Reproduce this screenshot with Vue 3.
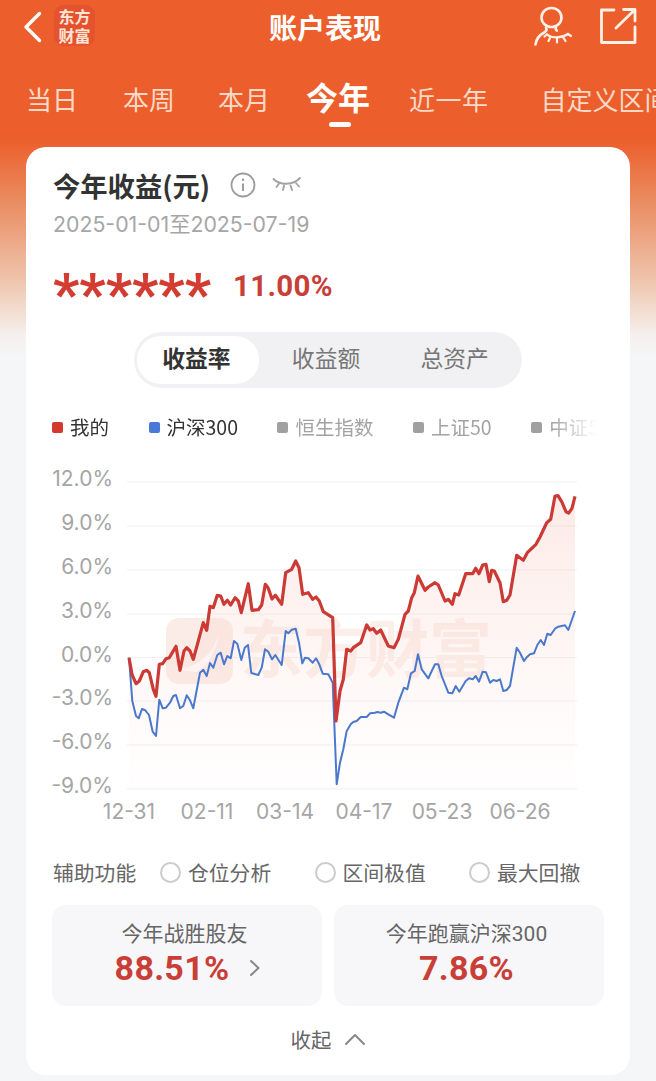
<script setup>
const toPts = (arr, ox) => {
  const out = []
  for (let i = 0; i < arr.length; i += 2) out.push([+(ox + arr[i] / 3).toFixed(1), +(460 + arr[i + 1] / 3).toFixed(1)])
  return out
}
const red = [
  ...toPts([267,590,276,640,288,668,298,660,310,632,320,628,328,635,340,685,348,706,358,610,368,608,378,593,388,590,408,556,420,628,432,570,440,560,450,570,460,595,490,485,500,508,510,436,520,440,532,403,542,405,552,430,562,418,572,432,585,410,595,420,604,455,625,368,636,448,655,446,665,432,676,370,685,382,696,414,706,403,725,430,737,335,755,325,767,300,777,320,788,400,805,395,818,415,828,408,838,420,850,452,878,470], 40),
  ...toPts([48,780,60,690,70,655,80,565,92,570,100,560,122,545,140,492,150,507,160,503,170,517,182,507,205,555,222,560,235,535,255,460,265,450,275,410,283,395,294,345,315,388,325,378,345,365,355,372,375,420,385,415,397,430,405,398,416,402,437,338,458,338,467,322,477,338,488,312,498,310,508,362,515,328,523,330,540,365,550,422,560,418,570,402,590,283,610,298,622,275,648,250,660,228,680,185,692,175,705,105,714,104,725,122,738,152,746,156,756,142,765,106], 320)
]
const blue = [
  ...toPts([267,590,277,720,288,765,296,772,306,744,316,748,327,762,338,812,348,825,358,716,368,742,378,740,390,725,400,705,408,702,420,742,430,735,440,703,450,718,460,742,480,635,490,626,500,645,510,606,520,620,532,582,542,575,552,610,562,585,572,592,582,540,592,548,604,597,614,560,624,552,634,636,655,642,665,620,675,565,685,572,696,595,706,582,725,612,737,510,745,517,755,506,767,503,777,545,787,607,795,590,805,592,818,605,828,592,838,610,848,638,865,640,878,665], 40),
  ...toPts([50,970,60,905,70,865,80,810,92,790,100,783,110,780,122,768,140,768,150,757,165,755,172,753,182,755,192,752,205,760,222,770,235,725,252,680,262,685,273,637,284,630,294,580,305,625,325,652,345,610,355,610,365,645,385,695,397,697,407,675,418,692,437,660,447,652,458,655,467,645,477,662,488,632,498,634,510,665,520,657,530,660,540,655,550,690,560,687,570,675,590,560,600,575,612,600,622,587,630,580,642,577,652,552,662,537,672,552,682,518,692,522,705,503,715,497,735,493,745,507,765,450], 320)
]
const line = (p) => 'M' + p.map((q) => q.join(' ')).join('L')
const redPath = line(red)
const bluePath = line(blue)
const areaPath = redPath + `L${red[red.length - 1][0]} 788L${red[0][0]} 788Z`

const yLabels = [
  { t: '12.0%', g: 481 }, { t: '9.0%', g: 525 }, { t: '6.0%', g: 569 }, { t: '3.0%', g: 613 },
  { t: '0.0%', g: 656.5 }, { t: '-3.0%', g: 700 }, { t: '-6.0%', g: 744 }, { t: '-9.0%', g: 788 }
]
const xLabels = [
  { t: '12-31', x: 129 }, { t: '02-11', x: 207 }, { t: '03-14', x: 285 },
  { t: '04-17', x: 364 }, { t: '05-23', x: 442 }, { t: '06-26', x: 520 }
]
const tabs = ['当日', '本周', '本月', '今年', '近一年', '自定义区间']
const legend = [
  { t: '我的', c: 'red', on: true }, { t: '沪深300', c: 'blue', on: true },
  { t: '恒生指数', c: 'grey' }, { t: '上证50', c: 'grey' }, { t: '中证500', c: 'grey' }
]
const radios = ['仓位分析', '区间极值', '最大回撤']
const logoText = '东方\n财富'
</script>

<template>
  <div class="page">
    <header class="nav">
      <svg class="back" width="20" height="32" viewBox="0 0 20 32"><path d="M16.5 2.5 3 16l13.5 13.5" fill="none" stroke="#fff" stroke-width="3.4" stroke-linecap="round" stroke-linejoin="round"/></svg>
      <div class="logo">{{ logoText }}</div>
      <h1 class="title">账户表现</h1>
      <svg class="user" width="40" height="40" viewBox="0 0 40 40" fill="none" stroke="#fdf0e6" stroke-width="2.6" stroke-linecap="round" stroke-linejoin="round">
        <ellipse cx="18.5" cy="11.5" rx="10" ry="9.5"/>
        <path d="M13 21.5c1 2 1 3-1 4.500C6.500 29 3 33 2.500 38.500"/>
        <path d="M23 21c-.6 1.500-.4 2.500.8 3.600"/>
        <path d="M14 28.500c5 4 14 4 21-.5" stroke-width="2.200"/>
        <path d="M17.500 31 15.500 35M24 32.500V36.500M30 31l2.500 4M35 28l3 2M14 28.500l-2.500 2" stroke-width="2.200"/>
      </svg>
      <svg class="share" width="38" height="38" viewBox="0 0 38 38" fill="none" stroke="#fdf0e6" stroke-width="2.800" stroke-linecap="round" stroke-linejoin="round">
        <path d="M15 3H2.500v32.500H36V20"/>
        <path d="M17 21 35.500 3M24.500 2.500H36V14"/>
      </svg>
    </header>

    <nav class="tabs">
      <span v-for="t in tabs" :key="t" class="tab" :class="{ active: t === '今年' }">{{ t }}</span>
    </nav>

    <main class="card">
      <div class="head">
        <span class="h-title">今年收益(元)</span>
        <svg class="info" width="26" height="26" viewBox="0 0 26 26" fill="none" stroke="#9c9c9c" stroke-width="1.800"><circle cx="13" cy="13" r="11.500"/><path d="M13 11.500v7.500" stroke-width="2"/><circle cx="13" cy="7.800" r="1.200" fill="#9c9c9c" stroke="none"/></svg>
        <svg class="eye" width="30" height="18" viewBox="0 0 30 18" fill="none" stroke="#a3a3a3" stroke-width="1.900" stroke-linecap="round"><path d="M1.500 3C8 9.500 21 9.500 28 2"/><path d="M7 7.500 4.500 11M12 9.500 11 14M18.500 9.500 20 14M24 7 27 10.500"/></svg>
      </div>
      <p class="date">2025-01-01至2025-07-19</p>
      <div class="amount">
        <span class="stars">******</span>
        <span class="pct">11.00%</span>
      </div>

      <div class="segment">
        <span class="seg on">收益率</span>
        <span class="seg">收益额</span>
        <span class="seg">总资产</span>
      </div>

      <div class="legend">
        <span v-for="l in legend" :key="l.t" class="leg" :class="[l.c, { on: l.on }]"><i></i>{{ l.t }}</span>
      </div>

      <svg class="chart" width="604" height="370" viewBox="26 460 604 370">
        <defs>
          <linearGradient id="area" x1="0" y1="0" x2="0" y2="1">
            <stop offset="0" stop-color="#f6b9ae" stop-opacity="0.3"/>
            <stop offset="0.55" stop-color="#f9cfc6" stop-opacity="0.18"/>
            <stop offset="1" stop-color="#fbe4df" stop-opacity="0.04"/>
          </linearGradient>
        </defs>
        <line v-for="l in yLabels" :key="l.t" x1="127" x2="577" :y1="l.g" :y2="l.g" stroke="#f0f0f3" stroke-width="1.200"/>
        <g class="wm">
          <rect x="166" y="617" width="67" height="66" rx="13" fill="#fbece7"/>
          <path d="M178 669c24-4 38-20 42-42-4 24-10 36-24 44z" fill="#fff" opacity=".8"/>
          <text x="240" y="671" class="wm-text">东方财富</text>
        </g>
        <path :d="areaPath" fill="url(#area)"/>
        <path :d="bluePath" fill="none" stroke="#4a78cc" stroke-width="2" stroke-linejoin="round"/>
        <path :d="redPath" fill="none" stroke="#cb3a35" stroke-width="3.200" stroke-linejoin="round"/>
        <text v-for="l in yLabels" :key="'y' + l.t" x="113" :y="l.g + 4" text-anchor="end" class="axis">{{ l.t }}</text>
        <text v-for="l in xLabels" :key="l.t" :x="l.x" y="818" text-anchor="middle" class="axis">{{ l.t }}</text>
      </svg>

      <div class="aux">
        <span class="aux-label">辅助功能</span>
        <label v-for="r in radios" :key="r" class="radio"><i></i>{{ r }}</label>
      </div>

      <div class="stats">
        <div class="stat">
          <span class="s-label">今年战胜股友</span>
          <span class="s-value first">88.51%
            <svg class="s-arrow" width="12" height="18" viewBox="0 0 12 18"><path d="M2 2l7.500 7L2 16" fill="none" stroke="#888" stroke-width="2" stroke-linecap="round" stroke-linejoin="round"/></svg>
          </span>
        </div>
        <div class="stat">
          <span class="s-label">今年跑赢沪深300</span>
          <span class="s-value">7.86%</span>
        </div>
      </div>

      <div class="fold">收起
        <svg width="22" height="14" viewBox="0 0 22 14"><path d="M2 12 11 3l9 9" fill="none" stroke="#888" stroke-width="2" stroke-linecap="round" stroke-linejoin="round"/></svg>
      </div>
    </main>
  </div>
</template>

<style>
html, body { margin: 0; padding: 0; background: #f5f6f8; }
</style>

<style scoped>
.page {
  width: 656px;
  height: 1081px;
  overflow: hidden;
  font-family: Roboto, "Noto Sans CJK SC", sans-serif;
  background: linear-gradient(180deg, #ec5f2c 0, #ec5f2c 140px, #ea8b5f 200px, #efc4ac 280px, #f5f0ed 335px, #f5f6f8 358px);
  color: #333;
}
.nav { height: 55px; display: flex; align-items: center; position: relative; }
.back { margin-left: 23px; margin-top: -2px; }
.logo {
  width: 41px; height: 41px; margin-left: 11px; margin-top: -4px;
  background: #e5532e; border-radius: 9px;
  white-space: pre-line; text-align: center; box-sizing: border-box; padding-top: 2px;
  color: #fde6d8; font: 700 16px/19px "Noto Sans CJK SC", sans-serif;
}
.title {
  position: absolute; left: 0; right: 0; top: 8px; margin: 0; padding-right: 6px;
  text-align: center; color: #fff;
  font: 700 28px/38px "Noto Sans CJK SC", sans-serif;
}
.user { margin-left: auto; margin-top: -3px; }
.share { margin-left: 26px; margin-right: 19px; margin-top: -4px; }
.tabs { height: 92px; display: flex; white-space: nowrap; overflow: hidden; padding-left: 26px; position: relative; }
.tab {
  font: 400 26px/36px "Noto Sans CJK SC", sans-serif; color: #fbd9c6;
  margin-top: 26px; flex: none; height: 36px;
}
.tab:nth-child(2) { margin-left: 45px; }
.tab:nth-child(3) { margin-left: 43px; }
.tab:nth-child(4) { margin-left: 36px; }
.tab:nth-child(5) { margin-left: 39px; letter-spacing: .5px; }
.tab:nth-child(6) { margin-left: 52px; }
.tab.active { font-size: 32px; font-weight: 700; color: #fff; margin-top: 23px; position: relative; }
.tab.active::after {
  content: ""; position: absolute; left: 23px; top: 44px; width: 22px; height: 5px; border-radius: 3px; background: #fff;
}
.card {
  width: 604px; height: 928px; margin-left: 26px; box-sizing: border-box;
  background: #fff; border-radius: 20px; position: relative;
}
.head { display: flex; align-items: center; padding: 20px 0 0 27px; height: 36px; }
.h-title { font: 700 27.300px/36px "Noto Sans CJK SC", sans-serif; color: #333; }
.info { margin-left: 20px; }
.eye { margin-left: 16px; margin-top: -1px; }
.date { margin: 6px 0 0 27px; font: 400 21.300px/30px Inter, "Noto Sans CJK SC", sans-serif; color: #a6a6a6; }
.amount { display: flex; align-items: center; height: 40px; margin: 27px 0 0 27px; }
.stars { font: 700 58px/40px Roboto, sans-serif; color: #d33c31; width: 180px; height: 40px; position: relative; top: 8px; }
.pct { font: 700 29.500px/40px Roboto, sans-serif; color: #c93f38; letter-spacing: .3px; }
.segment {
  width: 388px; height: 56px; margin: 26px 0 0 108px; box-sizing: border-box; padding: 4px 3px;
  background: #f1f1f3; border-radius: 28px; display: flex;
}
.seg { width: 130px; height: 48px; text-align: center; font: 400 22.800px/44px "Noto Sans CJK SC", sans-serif; color: #777; }
.seg.on { width: 123px; background: #fff; border-radius: 24px; font-weight: 700; color: #333; margin-right: 3px; padding-right: 3px; box-sizing: border-box; }
.legend {
  display: flex; height: 30px; margin: 24px 0 0 26px; width: 544px; overflow: hidden;
  font: 400 19.500px/30px "Noto Sans CJK SC", sans-serif; color: #333; white-space: nowrap;
  -webkit-mask-image: linear-gradient(90deg, #000 500px, transparent 544px);
  mask-image: linear-gradient(90deg, #000 500px, transparent 544px);
}
.leg { display: flex; align-items: center; flex: none; margin-right: 39.500px; color: #a3a3a3; }
.leg.on { color: #333; }
.leg i { width: 11px; height: 11px; border-radius: 2px; margin-right: 7px; background: #a0a0a0; }
.leg.red i { background: #d4392f; }
.leg.blue i { background: #4a78d8; }
.chart { display: block; margin-top: 19px; }
.wm-text { font: 700 63px "Noto Sans CJK SC", sans-serif; fill: #fcefea; }
.axis { font: 400 21px Inter, "Noto Sans CJK SC", sans-serif; fill: #a5a5a5; }
.aux { display: flex; align-items: center; height: 30px; margin: 26px 0 0 27px; font: 400 20.800px/30px "Noto Sans CJK SC", sans-serif; color: #666; }
.aux-label { width: 107px; flex: none; }
.radio { display: flex; align-items: center; width: 154.500px; flex: none; }
.radio i { width: 17px; height: 17px; border: 2px solid #ccc; border-radius: 50%; margin-right: 7px; }
.stats { display: flex; gap: 12px; margin: 18px 0 0 26px; }
.stat {
  width: 270px; height: 101px; background: #f7f7f9; border-radius: 14px;
  display: flex; flex-direction: column; align-items: center; padding: 14px 5px 0 0; box-sizing: border-box;
}
.s-label { font: 400 21px/30px Roboto, "Noto Sans CJK SC", sans-serif; color: #666; }
.s-value { font: 700 34px/38px Roboto, sans-serif; color: #c93f38; letter-spacing: .3px; display: flex; align-items: center; }
.s-value.first { margin-left: 7px; }
.s-arrow { margin-left: 20px; }
.fold { display: flex; align-items: center; justify-content: center; gap: 12px; margin-top: 17px; height: 32px; font: 400 20.500px/32px "Noto Sans CJK SC", sans-serif; color: #666; }
</style>
